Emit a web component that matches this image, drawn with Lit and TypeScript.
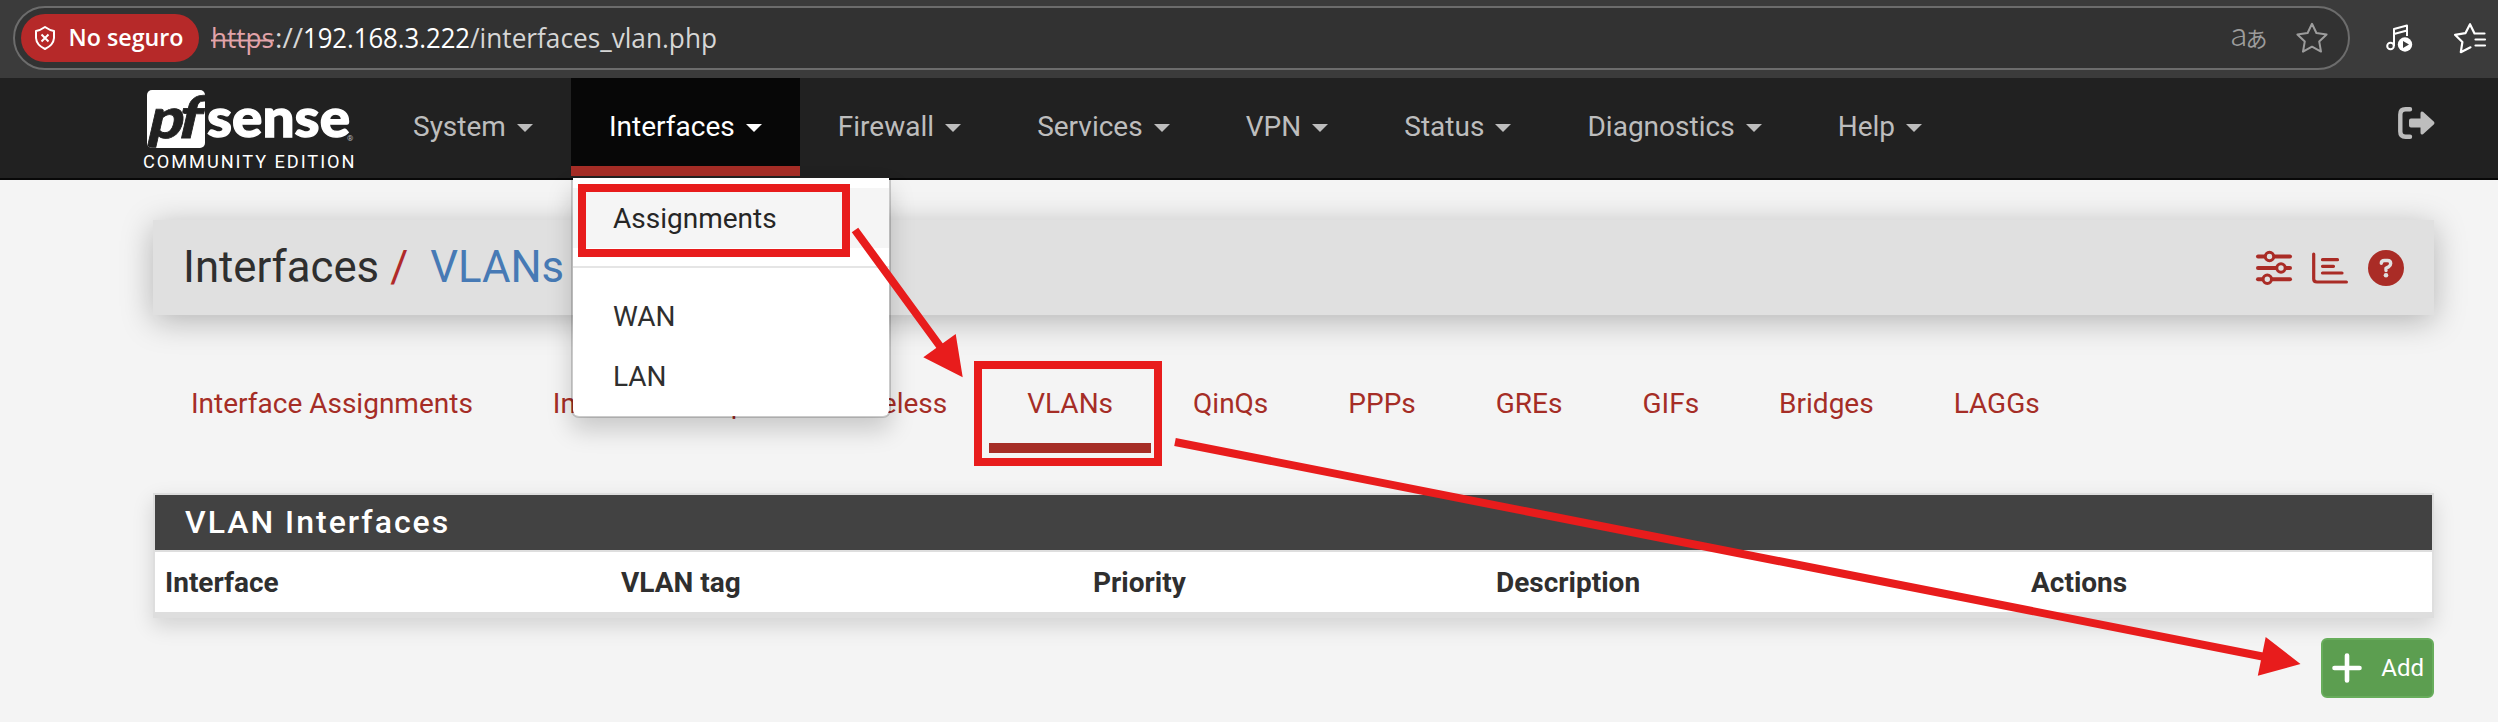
import { LitElement, html, css, svg } from "lit";
import { customElement } from "lit/decorators.js";
import { classMap } from "lit/directives/class-map.js";

const STAR = "M0 -14.2 L4.4 -5 L14.6 -3.6 L7.2 3.4 L9 13.6 L0 8.7 L-9 13.6 L-7.2 3.4 L-14.6 -3.6 L-4.4 -5 Z";

@customElement("browser-bar")
class BrowserBar extends LitElement {
  static styles = css`
    :host { display: flex; height: 78px; background: #3b3b3b; align-items: flex-start; box-sizing: border-box; padding: 6px 0 0 13px; overflow: hidden; }
    .address { box-sizing: border-box; width: 2337px; height: 64px; border: 2px solid #6c6c6c; border-radius: 32px; background: #323232; display: flex; align-items: center; flex: none; }
    .badge { display: flex; align-items: center; height: 48px; width: 178px; box-sizing: border-box; border-radius: 24px; background: #b62929; padding-left: 12px; gap: 11px; margin-left: 6px; }
    svg { display: block; overflow: visible; flex: none; }
    .url { margin-left: 12px; }
    .tools { margin-left: auto; display: flex; align-items: center; gap: 30px; padding-right: 20px; }
    .side { display: flex; height: 64px; align-items: center; padding-left: 36px; gap: 39px; }
    text { font-family: "Open Sans", sans-serif; }
    .word { font-size: 24px; font-weight: 600; fill: #fff; }
    .addr { font-size: 27px; fill: #fff; }
    .dim { fill: #d6d6d6; }
    .bad { fill: #e2a3a9; }
    .jp { font-family: "Noto Sans CJK JP", sans-serif; fill: #9c9c9c; }
  `;
  render() {
    return html`
      <div class="address">
        <div class="badge">
          <svg width="24" height="26" viewBox="0 0 24 26" fill="none" stroke="#fff" stroke-width="2">
            <path d="M12 2 Q7 5.500 3 6 V13 Q3.500 20 12 24 Q20.500 20 21 13 V6 Q17 5.500 12 2Z" stroke-linejoin="round" />
            <path d="M8.500 9.500 L15.500 16.500 M15.500 9.500 L8.500 16.500" />
          </svg>
          <svg width="116" height="32"><text class="word" x="0.500" y="24" textLength="115" lengthAdjust="spacingAndGlyphs">No seguro</text></svg>
        </div>
        <svg class="url" width="510" height="40">
          <text class="addr bad" x="0" y="30" textLength="63" lengthAdjust="spacingAndGlyphs">https</text>
          <path d="M0 22.500H63" stroke="#e2a3a9" stroke-width="2" />
          <text class="addr dim" x="64" y="30" textLength="28" lengthAdjust="spacingAndGlyphs">://</text>
          <text class="addr" x="92" y="30" textLength="167" lengthAdjust="spacingAndGlyphs">192.168.3.222</text>
          <text class="addr dim" x="259" y="30" textLength="247" lengthAdjust="spacingAndGlyphs">/interfaces_vlan.php</text>
        </svg>
        <div class="tools">
          <svg width="34" height="32"><text class="jp" x="-2" y="24" font-size="32" font-weight="300">a</text><text class="jp" x="13.500" y="25" font-size="22">あ</text></svg>
          <svg width="32" height="32" viewBox="-16 -16 32 32"><path d=${STAR} fill="none" stroke="#9c9c9c" stroke-width="2" stroke-linejoin="round" /></svg>
        </div>
      </div>
      <div class="side">
        <svg width="28" height="28" viewBox="0 0 28 28" fill="none" stroke="#fff" stroke-width="2">
          <circle cx="4.500" cy="22" r="3.300" /><path d="M8 22V5L21 1.500V12M8 10L21 6.500" stroke-linejoin="round" />
          <circle cx="19" cy="20.500" r="7.200" fill="#fff" stroke="none" /><path d="M17 17V24L23 20.500Z" fill="#3b3b3b" stroke="none" />
        </svg>
        <svg width="34" height="32" viewBox="0 0 34 32" fill="none" stroke="#fff" stroke-width="2.200" stroke-linejoin="round" stroke-linecap="round">
          <path d="M31.500 11.500H21.500L17 2.200L12.400 11.200L2 12.800L9.400 20L7.800 30.200L17.500 25.300" /><path d="M22.500 17.500H32M22.500 23.500H32" />
        </svg>
      </div>`;
  }
}

@customElement("nav-bar")
class NavBar extends LitElement {
  static styles = css`
    :host { display: flex; height: 102px; box-sizing: border-box; background: #212121; border-bottom: 2px solid #080808; padding-left: 143px; position: relative; z-index: 3; }
    .brand { width: 232px; flex: none; }
    .brand svg { display: block; overflow: visible; }
    .item { position: relative; padding: 0 38px; height: 88px; display: flex; align-items: center; color: #bdbdbd; font-size: 28px; line-height: 40px; padding-bottom: 10px; box-sizing: content-box; flex: none; }
    .item.open { background: #070707; color: #fff; padding-bottom: 0; border-bottom: 10px solid #a52d26; }
    .label { position: relative; top: 5px; display: flex; align-items: center; }
    .caret { margin-left: 11.1px; border: 8px solid transparent; border-top-color: currentColor; border-bottom: 0; margin-top: 1px; }
    .menu { position: absolute; top: 100px; left: 0; width: 316px; height: 238px; box-sizing: content-box; border: 2px solid rgba(0,0,0,.17); border-top: 0; border-radius: 0 0 8px 8px; background: #fff; background-clip: padding-box; box-shadow: 0 12px 24px rgba(0,0,0,.175); padding: 0; color: #2f2f2f; }
    .entry { height: 60px; line-height: 61px; padding-left: 40px; }
    .entry.hover { background: #f5f5f5; margin-top: 10px; color: #262626; }
    .sep { height: 2px; background: #e5e5e5; margin: 18px 0; }
    .exit { margin-left: auto; margin-right: 63px; margin-top: 29px; }
  `;
  private items = ["System", "Interfaces", "Firewall", "Services", "VPN", "Status", "Diagnostics", "Help"];
  render() {
    return html`
      <div class="brand">
        <svg width="214" height="98" viewBox="143 78 214 98">
          <defs><clipPath id="box"><rect x="147" y="90" width="58" height="58" rx="5" /></clipPath></defs>
          <rect x="147" y="90" width="58" height="58" rx="5" fill="#fff" />
          <g clip-path="url(#box)"><g transform="translate(0 137.500) skewX(-13)" fill="#212121" stroke="#212121" font-family="Lato" font-weight="900">
            <text x="146" y="0" font-size="56" stroke-width="0.800" textLength="35" lengthAdjust="spacingAndGlyphs">p</text>
            <text x="175.500" y="0" font-size="58" stroke-width="0.800" textLength="23" lengthAdjust="spacingAndGlyphs">f</text>
          </g></g>
          <text x="207" y="137" fill="#fff" stroke="#fff" stroke-width="1.300" font-family="Lato" font-weight="900" font-size="54" textLength="143" lengthAdjust="spacingAndGlyphs">sense</text>
          <text x="347" y="141" fill="#bbb" font-family="Roboto" font-size="8">®</text>
          <text x="143" y="168" fill="#fff" font-family="Roboto" font-size="18.200" textLength="211.500">COMMUNITY EDITION</text>
        </svg>
      </div>
      ${this.items.map((name) => html`
        <div class=${classMap({ item: true, open: name === "Interfaces" })}>
          <span class="label">${name}<i class="caret"></i></span>
          ${name === "Interfaces" ? html`<div class="menu">
            <div class="entry hover">Assignments</div><div class="sep"></div>
            <div class="entry">WAN</div><div class="entry">LAN</div>
          </div>` : ""}
        </div>`)}
      <svg class="exit" width="37" height="32" viewBox="0 0 37 32" fill="#bdbdbd">
        <path d="M12 2.300H7.500Q2.300 2.300 2.300 7.500V24.500Q2.300 29.700 7.500 29.700H12" fill="none" stroke="#bdbdbd" stroke-width="4.400" stroke-linecap="round" />
        <path d="M13 11.500H22.500V6.500Q22.500 3.500 25 4.800L36 14.800Q37 16 36 17.200L25 27.200Q22.500 28.500 22.500 25.500V20.500H13Q11 20.500 11 18.500V13.500Q11 11.500 13 11.500Z" />
      </svg>`;
  }
}

@customElement("app-root")
class AppRoot extends LitElement {
  static styles = css`
    :host { display: block; position: relative; height: 722px; width: 2498px; overflow: hidden; background: #f4f4f4; font-family: Roboto, sans-serif; font-size: 28px; color: #2f2f2f; }
    .page { width: 2281px; margin-left: 153px; padding-top: 40px; }
    .title { height: 95px; background: #e0e0e0; display: flex; align-items: center; padding: 0 30px; box-sizing: border-box; box-shadow: 0 6px 32px rgba(0,0,0,.27); font-size: 43.7px; line-height: 94px; white-space: pre; }
    .title > span { height: 95px; }
    .slash { color: #b02a2a; margin-left: 11px; margin-right: 22px; }
    .crumb { color: #477ab5; }
    .icons { margin-left: auto; display: flex; align-items: center; gap: 20px; }
    .icons svg { display: block; overflow: visible; }
    .tabs { display: flex; height: 98px; margin-top: 40px; gap: 4px; }
    .tab { padding: 0 38px; height: 88px; line-height: 98px; color: #a52d26; border-bottom: 10px solid transparent; white-space: nowrap; }
    .tab.active { border-color: #a52d26; }
    .panel { margin-top: 40px; border: 2px solid #dedede; border-bottom-width: 6px; box-shadow: 0 8px 20px rgba(0,0,0,.14); background: #fff; }
    .heading { height: 55px; line-height: 55px; background: #424242; border-bottom: 2px solid #dedede; color: #fff; font-weight: 500; font-size: 32px; letter-spacing: 2px; padding-left: 30px; }
    .head { display: grid; grid-template-columns: 456px 472px 403px 535px 1fr; height: 60px; line-height: 62px; padding-left: 10px; font-weight: 700; }
    .actions { display: flex; justify-content: flex-end; margin-top: 20px; }
    .add { box-sizing: border-box; width: 113px; height: 60px; border: 2px solid #67ad5b; border-radius: 6px; background: #5c9e50; color: #fff; font: 24px Roboto; display: flex; align-items: center; justify-content: flex-end; gap: 19px; padding: 0 8px 0 8px; }
    .marks { position: absolute; left: 0; top: 0; z-index: 5; pointer-events: none; }
  `;
  private tabs = ["Interface Assignments", "Interface Groups", "Wireless", "VLANs", "QinQs", "PPPs", "GREs", "GIFs", "Bridges", "LAGGs"];
  render() {
    const slider = (y: number, x: number) => svg`<path d="M2 ${y}H34" stroke-width="4" stroke-linecap="round" /><circle cx=${x} cy=${y} r="4.200" stroke-width="3" fill="#e0e0e0" />`;
    return html`
      <browser-bar></browser-bar>
      <nav-bar></nav-bar>
      <div class="page">
        <div class="title"><span>Interfaces</span><span class="slash">/</span><span class="crumb">VLANs</span>
          <div class="icons">
            <svg width="36" height="36" fill="none" stroke="#aa2c26">${slider(6.5, 13.5)}${slider(18, 25)}${slider(29.3, 11.3)}</svg>
            <svg width="36" height="36" fill="none" stroke="#aa2c26" stroke-width="3.200" stroke-linecap="round"><path d="M1.700 4V29Q1.700 32 5 32H34.400M10.500 9.700H25.500M10.500 16.300H21.500M10.500 23H30" /></svg>
            <svg width="36" height="36"><circle cx="18" cy="18" r="18" fill="#aa2c26" /><path d="M13.300 13.300Q13.300 10.500 16.500 10.500H19.500Q22.700 10.500 22.700 13.600Q22.700 15.500 20.700 16.700L18 18.200V20.500" fill="none" stroke="#e0e0e0" stroke-width="3.400" stroke-linecap="round" stroke-linejoin="round" /><circle cx="18" cy="25.300" r="2.300" fill="#e0e0e0" /></svg>
          </div>
        </div>
        <div class="tabs">${this.tabs.map((t) => html`<div class=${classMap({ tab: true, active: t === "VLANs" })}>${t}</div>`)}</div>
        <div class="panel">
          <div class="heading">VLAN Interfaces</div>
          <div class="head"><span>Interface</span><span>VLAN tag</span><span>Priority</span><span>Description</span><span>Actions</span></div>
        </div>
        <div class="actions"><button class="add"><svg width="30" height="30"><path d="M15 2.500V27.500M2.500 15H27.500" stroke="#fff" stroke-width="4.600" stroke-linecap="round" /></svg>Add</button></div>
      </div>
      <svg class="marks" width="2498" height="722" fill="none" stroke="#e81c1c" stroke-width="8">
        <rect x="582" y="188" width="264" height="65" />
        <rect x="978" y="365" width="180" height="97" />
        <path d="M855 230L942 349M1175 442L2265 657" />
        <path d="M962.700 377.300L923.300 357.300L955.700 334ZM2300.500 664L2265.700 637L2257.800 675.700Z" fill="#e81c1c" stroke="none" />
      </svg>`;
  }
}
